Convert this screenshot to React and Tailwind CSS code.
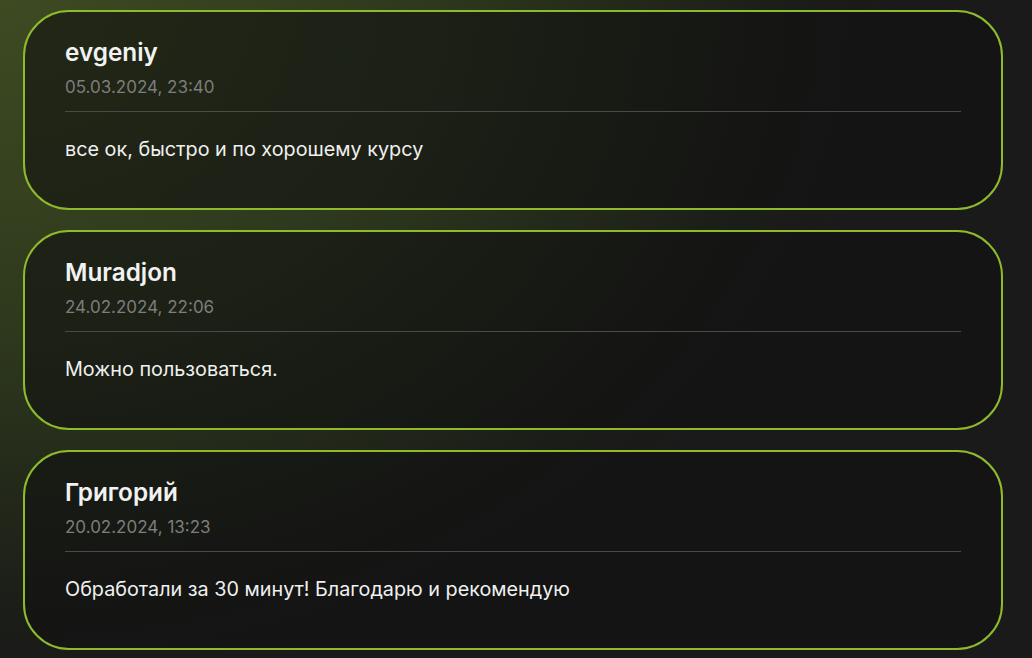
import React from "react";

const reviews = [
  { name: "evgeniy", date: "05.03.2024, 23:40", text: "все ок, быстро и по хорошему курсу" },
  { name: "Muradjon", date: "24.02.2024, 22:06", text: "Можно пользоваться." },
  { name: "Григорий", date: "20.02.2024, 13:23", text: "Обработали за 30 минут! Благодарю и рекомендую" },
];

export default function App() {
  return (
    <div
      className="w-[1032px] h-[658px] overflow-hidden bg-[#1a1a1a] bg-[radial-gradient(ellipse_900px_700px_at_0px_0px,#3d4a22_0%,#36421f_25%,#2e381d_48%,#23291a_70%,#1b1d18_88%,#1a1a1a_100%)]"
      style={{ fontFamily: "Inter, 'Noto Sans', sans-serif" }}
    >
      <div className="flex flex-col gap-[20px] pl-[23px] pt-[10px]">
        {reviews.map((r) => (
          <div
            key={r.name}
            className="w-[980px] h-[200px] rounded-[46px] border-2 border-[#8dbb2c] bg-[rgba(16,16,16,0.6)] px-[40px] pt-[25px]"
          >
            <div className="text-[24.3px] leading-[30px] font-semibold text-[#f2f2f2]">{r.name}</div>
            <div className="mt-[8px] text-[17px] leading-[24px] text-[#7d7d7b]">{r.date}</div>
            <div className="mt-[12px] h-px bg-[#4a4a48]" />
            <div className="mt-[23px] text-[19.8px] leading-[28px] text-[#f0f0f0]">{r.text}</div>
          </div>
        ))}
      </div>
    </div>
  );
}
